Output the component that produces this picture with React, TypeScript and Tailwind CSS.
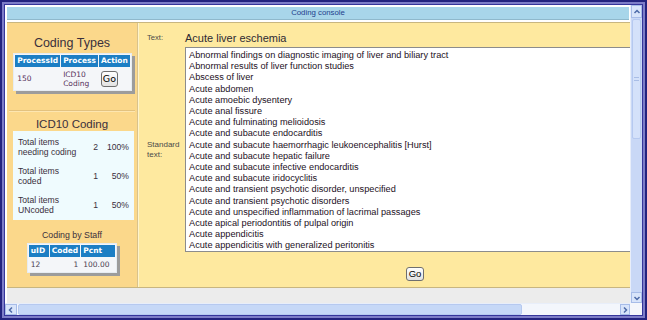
import React from 'react'

const items = [
  'Abnormal findings on diagnostic imaging of liver and biliary tract',
  'Abnormal results of liver function studies',
  'Abscess of liver',
  'Acute abdomen',
  'Acute amoebic dysentery',
  'Acute anal fissure',
  'Acute and fulminating melioidosis',
  'Acute and subacute endocarditis',
  'Acute and subacute haemorrhagic leukoencephalitis [Hurst]',
  'Acute and subacute hepatic failure',
  'Acute and subacute infective endocarditis',
  'Acute and subacute iridocyclitis',
  'Acute and transient psychotic disorder, unspecified',
  'Acute and transient psychotic disorders',
  'Acute and unspecified inflammation of lacrimal passages',
  'Acute apical periodontitis of pulpal origin',
  'Acute appendicitis',
  'Acute appendicitis with generalized peritonitis'
]

const totals = [
  { label: ['Total items', 'needing coding'], count: 2, pct: '100%' },
  { label: ['Total items', 'coded'], count: 1, pct: '50%' },
  { label: ['Total items', 'UNcoded'], count: 1, pct: '50%' }
]

const GoButton = ({ className = '' }: { className?: string }) => (
  <button
    className={`flex items-center justify-center rounded-[3px] border border-[#6f6f6f] bg-linear-to-b from-white to-[#e2e2e2] px-[2px] text-[9.5px] leading-none text-black ${className}`}
  >
    Go
  </button>
)

const Th = ({ children }: { children: React.ReactNode }) => (
  <th className="bg-[#1c7ec4] px-[2px] text-left text-[7.5px] font-bold leading-[12px] text-white">{children}</th>
)

// little chevron for the scroll buttons
const Chevron = ({ dir }: { dir: 'up' | 'down' | 'left' | 'right' }) => {
  const d = {
    up: 'M1.5 5 L4 2.5 L6.5 5',
    down: 'M1.5 3 L4 5.5 L6.5 3',
    left: 'M5 1.5 L2.5 4 L5 6.5',
    right: 'M3 1.5 L5.5 4 L3 6.5'
  }[dir]
  return (
    <svg width="8" height="8" viewBox="0 0 8 8">
      <path d={d} fill="none" stroke="#4d6aa8" strokeWidth="1.5" />
    </svg>
  )
}

// left column: coding types / ICD10 totals / staff
const SidePanel = () => (
  <div className="flex w-[131px] flex-col items-center border-r border-[#d8c28c] bg-[#fbd88b]">
    <div className="mt-[13px] text-[12.5px] leading-[14px] text-[#3a2f3c]">Coding Types</div>

    <table className="mt-[3px] ml-[1px] border-separate border-spacing-[1px] border border-[#e6ecf2] bg-[#f4f6f9] font-['DejaVu_Sans',Verdana,sans-serif] shadow-[3px_3px_0_#9c9c9c]">
      <thead>
        <tr>
          <Th>ProcessId</Th>
          <Th>Process</Th>
          <Th>Action</Th>
        </tr>
      </thead>
      <tbody>
        <tr className="h-[21px] text-[7.5px] text-[#54305a]">
          <td className="w-[43px] px-[2px]">150</td>
          <td className="w-[34px] px-[2px] leading-[9px]">
            ICD10
            <br />
            Coding
          </td>
          <td className="px-[2px]">
            <GoButton className="h-[16px] w-[17px]" />
          </td>
        </tr>
      </tbody>
    </table>

    <div className="mt-[19px] h-[2px] w-[126px] border-t border-[#e3c27e] border-b border-b-[#fde6b0]" />

    <div className="mt-[5px] text-[11.5px] leading-[14px] text-[#3a2f3c]">ICD10 Coding</div>

    <div className="ml-[6px] flex h-[89px] w-[121px] flex-col justify-center gap-[9px] self-start bg-[#effbfe] px-[5px] text-[8.6px] leading-[10px] text-[#3a2f3c]">
      {totals.map((t) => (
        <div key={t.label[1]} className="flex items-center">
          <div className="w-[74px]">
            {t.label[0]}
            <br />
            {t.label[1]}
          </div>
          <div className="w-[6px] text-right">{t.count}</div>
          <div className="flex-1 text-right">{t.pct}</div>
        </div>
      ))}
    </div>

    <div className="mt-[10px] text-[8.8px] leading-[11px] text-[#3a2f3c]">Coding by Staff</div>

    <table className="mt-[2px] border-separate border-spacing-[1px] border border-[#e6ecf2] bg-[#f4f6f9] font-['DejaVu_Sans',Verdana,sans-serif] shadow-[3px_3px_0_#9c9c9c]">
      <thead>
        <tr>
          <Th>uID</Th>
          <Th>Coded</Th>
          <Th>Pcnt</Th>
        </tr>
      </thead>
      <tbody>
        <tr className="h-[13px] text-[7.5px] text-[#4a4050]">
          <td className="w-[20px] px-[2px]">12</td>
          <td className="w-[28px] px-[2px] text-right">1</td>
          <td className="w-[34px] px-[2px]">100.00</td>
        </tr>
      </tbody>
    </table>
  </div>
)

const EntryPanel = () => (
  <div className="flex flex-1 flex-col overflow-hidden border-l border-[#fff4cc] bg-[#fee99f] pl-[8px]">
    <div className="mt-[9px] flex h-[12px] items-center">
      <span className="w-[38px] text-[7.6px] text-[#4a4a4a]">Text:</span>
      <span className="text-[11px] text-[#2e2a33]">Acute liver eschemia</span>
    </div>

    <div className="mt-[3px] flex items-center">
      <span className="w-[38px] text-[8px] leading-[10px] text-[#4a4a4a]">
        Standard
        <br />
        text:
      </span>
      <div className="h-[205px] flex-1 overflow-hidden border border-[#8c8c8c] border-r-0 bg-white pt-[2px] pl-[3px]">
        {items.map((it) => (
          <div key={it} className="whitespace-nowrap text-[9.2px] leading-[11.2px] text-[#1d1024]">
            {it}
          </div>
        ))}
      </div>
    </div>

    <div className="mt-[15px] flex pl-[259px]">
      <GoButton className="h-[14px] w-[18px]" />
    </div>
  </div>
)

const VScroll = () => (
  <div className="flex flex-col border-l border-[#e8eefa] bg-[#c9d8f6]">
    <div className="flex h-[13px] items-center justify-center border border-[#a7bce8] bg-[#d8e4fa]">
      <Chevron dir="up" />
    </div>
    <div className="mx-[1px] mt-[1px] flex h-[120px] items-center justify-center rounded-[2px] border border-[#b6c9f0] bg-[#d4e1fa]">
      <div className="h-[4px] w-[5px] border-y border-[#a9bde6]" />
    </div>
    <div className="flex-1" />
    <div className="flex h-[11px] items-center justify-center border border-[#a7bce8] bg-[#d8e4fa]">
      <Chevron dir="down" />
    </div>
  </div>
)

const HScroll = () => (
  <div className="flex border-t border-[#e8eefa] bg-[#f3f6fc]">
    <div className="flex w-[12px] items-center justify-center border border-[#a7bce8] bg-[#d8e4fa]">
      <Chevron dir="left" />
    </div>
    <div className="ml-[1px] h-full w-[504px] rounded-[2px] border border-[#b6c9f0] bg-[#c6d8f7]" />
    <div className="flex-1" />
    <div className="flex w-[10px] items-center justify-center border border-[#a7bce8] bg-[#d8e4fa]">
      <Chevron dir="right" />
    </div>
  </div>
)

const App = () => {
  return (
    <div className="h-[320px] w-[647px] bg-[#23237f] p-[2px] font-['Liberation_Sans',Arial,sans-serif]">
      <div className="h-full bg-[#7d7dc8] p-[2px]">
        <div className="h-full bg-[#35359b] p-px">
          <div className="grid h-full grid-cols-[1fr_12px] grid-rows-[1fr_12px] bg-white">
            <div className="flex flex-col overflow-hidden pt-[2px] pl-[2px]">
              <div className="mr-[1px] flex h-[13px] items-center justify-center border-b border-[#8fb9cc] bg-[#a8d6ea] text-[7.8px] text-[#223e8c]">
                Coding console
              </div>
              <div className="mt-[2px] flex h-[266px] border-y border-[#c8b680]">
                <SidePanel />
                <EntryPanel />
              </div>
              <div className="flex-1 bg-[#ececec]" />
            </div>
            <VScroll />
            <HScroll />
            <div className="bg-[#f4f6fb]" />
          </div>
        </div>
      </div>
    </div>
  )
}

export default App
